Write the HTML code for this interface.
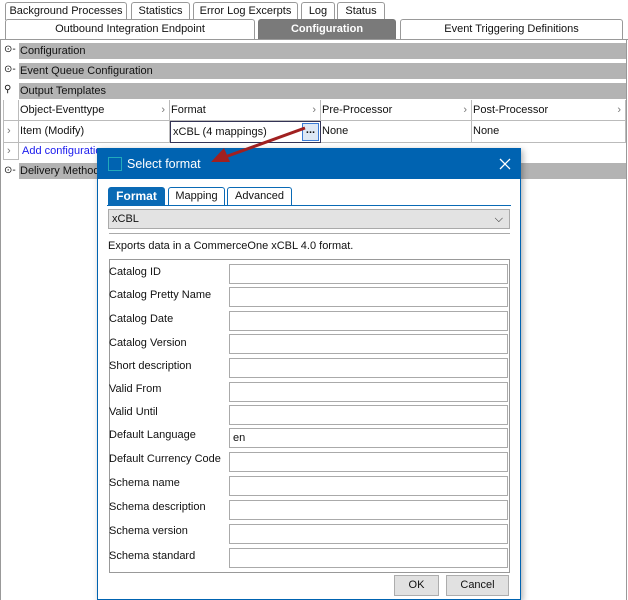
<!DOCTYPE html>
<html><head><style>
*{box-sizing:border-box;margin:0;padding:0}
body{width:628px;height:600px;background:#fff;font-family:"Liberation Sans",sans-serif;font-size:11px;color:#111;position:relative;overflow:hidden}
.a{position:absolute}
.tab{position:absolute;border:1px solid #999;border-bottom:none;background:#fff;border-radius:3px 3px 0 0;text-align:center;line-height:17px}
.bar{position:absolute;left:19px;right:2px;height:16px;background:#b3b3b3;line-height:16px;padding-left:1px}
.ic{position:absolute;left:4px;font-size:10px}
.cell{position:absolute;border-right:1px solid #bbb;border-bottom:1px solid #bbb;line-height:20px;padding-left:1px}
.lbl{position:absolute;left:109px}
.inp{position:absolute;left:229px;width:279px;height:20px;border:1px solid #aaa;background:#fff;padding-left:3px;line-height:18px}
</style></head><body>
<div class="tab" style="left:5px;top:2px;width:122px;height:18px">Background Processes</div>
<div class="tab" style="left:131px;top:2px;width:59px;height:18px">Statistics</div>
<div class="tab" style="left:193px;top:2px;width:105px;height:18px">Error Log Excerpts</div>
<div class="tab" style="left:301px;top:2px;width:34px;height:18px">Log</div>
<div class="tab" style="left:337px;top:2px;width:48px;height:18px">Status</div>
<div class="tab" style="left:5px;top:19px;width:250px;height:20px;line-height:19px">Outbound Integration Endpoint</div>
<div class="tab" style="left:258px;top:19px;width:138px;height:20px;background:#7a7a7a;color:#fff;font-weight:bold;border-color:#777;line-height:18px">Configuration</div>
<div class="tab" style="left:400px;top:19px;width:223px;height:20px;line-height:19px">Event Triggering Definitions</div>
<div class="a" style="left:0;top:39px;width:628px;height:1px;background:#999"></div>
<div class="a" style="left:0;top:39px;width:1px;height:561px;background:#999"></div>
<div class="a" style="left:626px;top:39px;width:1px;height:561px;background:#999"></div>
<div class="ic" style="top:44px">⊙-</div><div class="bar" style="top:43px">Configuration</div>
<div class="ic" style="top:64px">⊙-</div><div class="bar" style="top:63px">Event Queue Configuration</div>
<div class="ic" style="top:84px">⚲</div><div class="bar" style="top:83px">Output Templates</div>
<div class="a" style="left:3px;top:100px;width:623px;height:60px;border-left:1px solid #bbb"></div>
<div class="cell" style="left:3px;top:100px;width:16px;height:21px"></div>
<div class="cell" style="left:19px;top:100px;width:151px;height:21px">Object-Eventtype<span style="float:right;padding-right:4px;color:#777">›</span></div>
<div class="cell" style="left:170px;top:100px;width:151px;height:21px">Format<span style="float:right;padding-right:4px;color:#777">›</span></div>
<div class="cell" style="left:321px;top:100px;width:151px;height:21px">Pre-Processor<span style="float:right;padding-right:4px;color:#777">›</span></div>
<div class="cell" style="left:472px;top:100px;width:154px;height:21px">Post-Processor<span style="float:right;padding-right:4px;color:#777">›</span></div>
<div class="cell" style="left:3px;top:121px;width:16px;height:22px;color:#777;padding-left:4px">›</div>
<div class="cell" style="left:19px;top:121px;width:151px;height:22px">Item (Modify)</div>
<div class="cell" style="left:170px;top:121px;width:151px;height:22px;border:1px solid #335;padding-left:2px;line-height:20px">xCBL (4 mappings)<span class="a" style="left:131px;top:1px;width:17px;height:18px;border:1px solid #3a7bd5;background:#dde8f5;line-height:12px;text-align:center;font-weight:bold">...</span></div>
<div class="cell" style="left:321px;top:121px;width:151px;height:22px">None</div>
<div class="cell" style="left:472px;top:121px;width:154px;height:22px">None</div>
<div class="cell" style="left:3px;top:143px;width:16px;height:17px;color:#777;padding-left:4px;line-height:16px">›</div>
<div class="a" style="left:22px;top:145px;color:#1a1aee">Add configuration</div>
<div class="ic" style="top:165px">⊙-</div><div class="bar" style="top:163px">Delivery Method</div>
<div class="a" style="left:97px;top:148px;width:424px;height:452px;background:#fff;border:1px solid #0063b1;box-shadow:2px 2px 6px rgba(0,0,0,.3)">
<div class="a" style="left:0;top:0;width:422px;height:30px;background:#0063b1;color:#fff;font-size:12.5px;line-height:30px;padding-left:29px">Select format</div>
<div class="a" style="left:10px;top:8px;width:14px;height:14px;border:1px solid #2ab"></div>
<svg class="a" style="left:401px;top:9px" width="12" height="12"><path d="M1 1L11 11M11 1L1 11" stroke="#fff" stroke-width="1.3"/></svg>
<div class="a" style="left:10px;top:38px;width:57px;height:18px;background:#0a6ab5;color:#fff;font-weight:bold;line-height:18px;text-align:center;border-radius:3px 3px 0 0;font-size:12px">Format</div>
<div class="a" style="left:70px;top:38px;width:57px;height:18px;border:1px solid #0a6ab5;border-bottom:none;line-height:17px;text-align:center;border-radius:3px 3px 0 0">Mapping</div>
<div class="a" style="left:129px;top:38px;width:65px;height:18px;border:1px solid #0a6ab5;border-bottom:none;line-height:17px;text-align:center;border-radius:3px 3px 0 0">Advanced</div>
<div class="a" style="left:9px;top:56px;width:404px;height:1px;background:#0a6ab5"></div>
<div class="a" style="left:10px;top:60px;width:402px;height:20px;background:#e3e3e3;border:1px solid #aaa;line-height:18px;padding-left:3px">xCBL<span style="float:right;padding-right:6px">⌵</span></div>
<div class="a" style="left:11px;top:84px;width:401px;height:1px;background:#aaa"></div>
<div class="a" style="left:10px;top:91px">Exports data in a CommerceOne xCBL 4.0 format.</div>
<div class="a" style="left:11px;top:110px;width:401px;height:314px;border:1px solid #999"></div>
<div class="a" style="left:296px;top:426px;width:45px;height:21px;background:#e1e1e1;border:1px solid #adadad;text-align:center;line-height:19px">OK</div>
<div class="a" style="left:348px;top:426px;width:63px;height:21px;background:#e1e1e1;border:1px solid #adadad;text-align:center;line-height:19px">Cancel</div>
</div>
<svg class="a" style="left:200px;top:120px;z-index:5" width="120" height="50"><line x1="105" y1="8" x2="25" y2="37" stroke="#a02020" stroke-width="3"/><polygon points="11,42 24,28 30,42" fill="#a02020"/></svg>
<div class="lbl" style="top:266px">Catalog ID</div><div class="inp" style="top:264px"></div>
<div class="lbl" style="top:289px">Catalog Pretty Name</div><div class="inp" style="top:287px"></div>
<div class="lbl" style="top:313px">Catalog Date</div><div class="inp" style="top:311px"></div>
<div class="lbl" style="top:337px">Catalog Version</div><div class="inp" style="top:334px"></div>
<div class="lbl" style="top:360px">Short description</div><div class="inp" style="top:358px"></div>
<div class="lbl" style="top:383px">Valid From</div><div class="inp" style="top:382px"></div>
<div class="lbl" style="top:406px">Valid Until</div><div class="inp" style="top:405px"></div>
<div class="lbl" style="top:429px">Default Language</div><div class="inp" style="top:428px">en</div>
<div class="lbl" style="top:453px">Default Currency Code</div><div class="inp" style="top:452px"></div>
<div class="lbl" style="top:477px">Schema name</div><div class="inp" style="top:476px"></div>
<div class="lbl" style="top:501px">Schema description</div><div class="inp" style="top:500px"></div>
<div class="lbl" style="top:525px">Schema version</div><div class="inp" style="top:524px"></div>
<div class="lbl" style="top:550px">Schema standard</div><div class="inp" style="top:548px"></div>
</body></html>
